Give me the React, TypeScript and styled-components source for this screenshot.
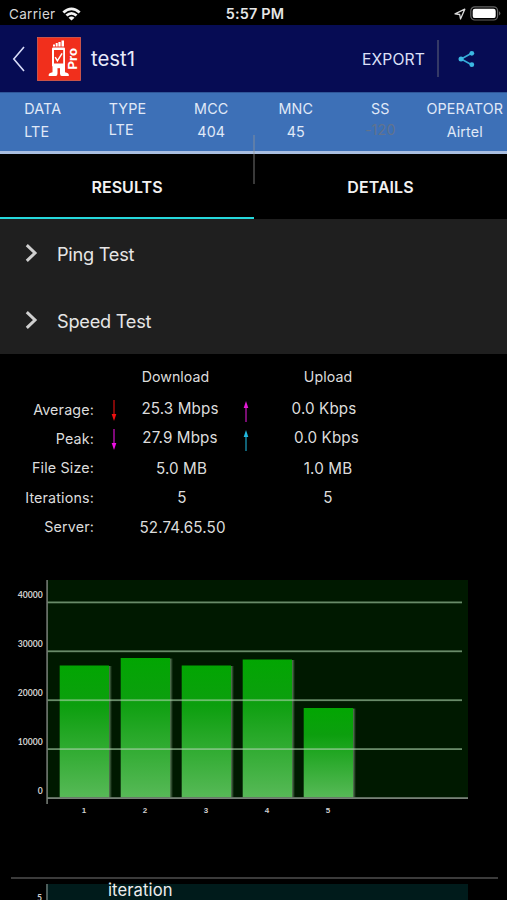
import React from 'react';
import styled, { createGlobalStyle } from 'styled-components';

const GlobalStyle = createGlobalStyle`
  * { box-sizing: border-box; }
  html, body { margin: 0; background: #000; overflow: hidden; }
  body { font-family: Inter, "Liberation Sans", sans-serif; color: #ededed; }
`;

const Screen = styled.div`
  display: flex;
  flex-direction: column;
  width: 507px;
  height: 900px;
  overflow: hidden;
  background: #000;
`;

const StatusBar = styled.div`
  display: grid;
  grid-template-columns: 1fr auto 1fr;
  align-items: center;
  flex: none;
  height: 25px;
  padding: 2px 6px 0 9px;
  font-size: 13.5px;
  line-height: 22px;
  color: #d6d6d6;
`;

const Carrier = styled.div`
  display: flex;
  align-items: center;
  gap: 6px;
  letter-spacing: 0.32px;
`;

const Clock = styled.div`
  font-size: 14.4px;
  font-weight: 600;
  letter-spacing: 0.2px;
  color: #e6e6e6;
`;

const StatusIcons = styled.div`
  display: flex;
  justify-content: flex-end;
  align-items: center;
  gap: 4px;
`;

const Header = styled.header`
  display: flex;
  align-items: center;
  flex: none;
  height: 67px;
  padding-left: 12px;
  background: #060c54;
`;

const AppIcon = styled.svg`
  margin-left: 12px;
`;

const Title = styled.h1`
  flex: 1;
  margin: 1px 0 0 10px;
  font-size: 20.4px;
  font-weight: 400;
  line-height: 24px;
  color: #e8eafa;
`;

const ExportButton = styled.button`
  margin-top: 2px;
  padding: 0;
  border: 0;
  background: none;
  font: 400 15.7px/20px Inter, sans-serif;
  letter-spacing: 0.1px;
  color: #dde0f8;
`;

const HeaderRule = styled.div`
  width: 2px;
  height: 37px;
  margin-left: 12px;
  background: #343966;
`;

const ShareButton = styled.button`
  display: flex;
  margin: 0 32px 0 19px;
  padding: 0;
  border: 0;
  background: none;
`;

const InfoBar = styled.div`
  display: grid;
  grid-template-columns: 84.5px 84.5px 84.5px 84.5px 84.5px 84.5px;
  flex: none;
  height: 62px;
  padding-top: 7px;
  border-top: 1px solid #2f5698;
  border-bottom: 3px solid #a9bee0;
  background: #3d70b7;
`;

const InfoColumn = styled.div<{ $start?: boolean }>`
  display: flex;
  flex-direction: column;
  align-items: ${p => (p.$start ? 'flex-start' : 'center')};
  padding-left: ${p => (p.$start ? 24.2 : 0)}px;
  white-space: nowrap;
  font-size: 14.3px;
  line-height: 18px;
  letter-spacing: 0.15px;
  color: #e0e9f7;
`;

const InfoValue = styled.span<{ $raised?: boolean; $muted?: boolean }>`
  margin-top: ${p => (p.$raised ? 3 : 5)}px;
  color: ${p => (p.$muted ? '#61738e' : 'inherit')};
`;

const TabBar = styled.nav`
  position: relative;
  display: grid;
  grid-template-columns: 254px 253px;
  flex: none;
  height: 65px;
`;

const Tab = styled.button<{ $active?: boolean }>`
  padding: 2px 0 0;
  border: 0;
  border-bottom: 2px solid ${p => (p.$active ? '#25d8dc' : '#000')};
  background: none;
  font: 600 16px/20px Inter, sans-serif;
  letter-spacing: 0.05px;
  color: #f2f2f2;
`;

const TabDivider = styled.div`
  position: absolute;
  left: 253px;
  top: -19px;
  width: 2px;
  height: 49px;
  background: rgba(150, 150, 150, 0.38);
`;

const Sections = styled.div`
  flex: none;
  height: 135px;
  background: #1f1f1f;
`;

const SectionRow = styled.button`
  display: flex;
  align-items: center;
  gap: 19px;
  width: 100%;
  height: 67px;
  padding: 2px 0 0 25px;
  border: 0;
  background: none;
  font: 400 18.2px/24px Inter, sans-serif;
  letter-spacing: -0.25px;
  color: #e6e6e6;
`;

const Results = styled.div`
  display: flex;
  flex-direction: column;
  flex: none;
  height: 220px;
  padding-top: 9px;
`;

const ResultRow = styled.div<{ $head?: boolean }>`
  display: grid;
  grid-template-columns: 94px 40px 96px 32px 132px;
  align-items: center;
  height: ${p => (p.$head ? 32 : 29.3)}px;
  padding-bottom: ${p => (p.$head ? 5 : 0)}px;
  white-space: nowrap;
  font-size: 14.3px;
  line-height: 20px;
  color: #dcdcdc;
`;

const Label = styled.span`
  text-align: right;
  letter-spacing: 0.15px;
`;

const ArrowCell = styled.span`
  display: flex;
  justify-content: center;
  padding-top: 2px;
`;

const Value = styled.span<{ $shift?: number; $lift?: number; $small?: boolean }>`
  display: flex;
  justify-content: center;
  margin-left: ${p => p.$shift ?? 0}px;
  margin-right: ${p => -(p.$shift ?? 0)}px;
  margin-top: ${p => -(p.$lift ?? 0)}px;
  margin-bottom: ${p => p.$lift ?? 0}px;
  font-size: ${p => (p.$small ? 14.2 : 15.2)}px;
  letter-spacing: ${p => (p.$small ? 0.05 : 0.12)}px;
`;

const Chart = styled.svg`
  display: block;
  flex: none;
`;

const AxisText = styled.text`
  font-family: Lato, sans-serif;
  font-size: 8.6px;
  font-weight: 700;
  fill: #cfcfcf;
`;

const BarText = styled(AxisText)`
  font-family: "Liberation Sans", sans-serif;
  font-size: 8px;
`;

const Divider = styled.hr`
  flex: none;
  width: 487px;
  height: 2px;
  margin: 48px 0 5px 11px;
  border: 0;
  background: #3b3b3b;
`;

const IterationPanel = styled.div`
  display: grid;
  grid-template-columns: 46px 422px;
  flex: none;
  height: 16px;
`;

const IterationAxis = styled.span`
  padding: 8px 4px 0 0;
  text-align: right;
  font: 700 8.6px/12px Lato, sans-serif;
  color: #cfcfcf;
`;

const IterationBody = styled.div`
  padding-left: 60px;
  border-left: 2px solid #4d5d5b;
  background: #001b1b;
  font-size: 16.6px;
  line-height: 13px;
  letter-spacing: 0.1px;
`;

const WifiIcon = () => (
  <svg width="19" height="14" viewBox="0 0 19 14">
    <path d="M0.4 4.5Q9.5-3.7 18.6 4.5L16.7 6.5Q9.5.2 2.3 6.5ZM3.5 7.6Q9.5 2.4 15.5 7.6L13.6 9.6Q9.5 6.1 5.4 9.6ZM6.5 10.7Q9.5 8.2 12.5 10.7L9.5 13.6Z" fill="#f2f2f2" />
  </svg>
);

const LocationIcon = () => (
  <svg width="12" height="12" viewBox="0 0 12 12">
    <path d="M1 5.8 10.8 1.2 6.5 11 5.7 6.5Z" fill="none" stroke="#dadada" strokeWidth="1.3" strokeLinejoin="round" />
  </svg>
);

const BatteryIcon = () => (
  <svg width="31" height="15" viewBox="0 0 31 15">
    <rect x="0.8" y="0.8" width="26.8" height="13.2" rx="4" fill="none" stroke="#656565" strokeWidth="1.2" />
    <rect x="2.7" y="2.7" width="23" height="9.4" rx="2.2" fill="#fff" />
    <path d="M29 5.2Q31.8 7.4 29 9.6Z" fill="#656565" />
  </svg>
);

const LogoIcon = () => (
  <AppIcon width="44" height="44" viewBox="0 0 44 44">
    <rect x="0.5" y="0.5" width="43" height="43" fill="#f12f1c" stroke="#db624f" strokeWidth="0.8" />
    <g fill="#fff">
      <path d="M16 9.5v-2h2v2zM18.7 9.5V6h2v3.5zM21.4 9.5V5h2.2v4.5zM24.5 9.5V3.5h2.5v6z" />
      <path fillRule="evenodd" d="M16.3 10.5h10.5q1.2 0 1.2 1.2v17.6h-13V11.7q0-1.2 1.3-1.2ZM17 13v13.6h9.2V13Z" />
      <path d="M15.5 29h5v7.5q0 2.5-1.8 2.5h-7v-1.2q0-2 3.8-2.6ZM23 29h5v6.2q3.8.6 3.8 2.6V39h-7q-1.8 0-1.8-2.5Z" />
      <rect x="20" y="28.5" width="3.7" height="2.7" />
    </g>
    <path d="m18.2 20.2 2.2 3.7 4.7-7.5" fill="none" stroke="#fff" strokeWidth="1.5" />
    <text transform="translate(39.8 32.5) rotate(-90)" fontFamily="Inter, sans-serif" fontSize="11.8" fontWeight="700" textLength="21.5" lengthAdjust="spacingAndGlyphs" fill="#fff">Pro</text>
  </AppIcon>
);

const ShareIcon = () => (
  <svg width="17" height="18" viewBox="0 0 17 18">
    <path d="M14 3 3.2 9 14 15" fill="none" stroke="#36acd9" strokeWidth="1.6" />
    <g fill="#3cb9e3">
      <circle cx="13.8" cy="3.3" r="2.4" />
      <circle cx="3" cy="9" r="2.5" />
      <circle cx="13.8" cy="14.7" r="2.4" />
    </g>
  </svg>
);

const Arrow = ({ color, up }: { color: string; up?: boolean }) => (
  <svg width="6" height="22" viewBox="0 0 6 22">
    <g transform={up ? 'translate(0 1)' : 'rotate(180 3 11) translate(0 1)'}>
      <path d="M3 5v16" stroke={color} strokeWidth="1.5" opacity="0.7" />
      <path d="M3 0 5.3 7H.7Z" fill={color} />
    </g>
  </svg>
);

const info = [
  { label: 'DATA', value: 'LTE', start: true },
  { label: 'TYPE', value: 'LTE', start: true, raised: true },
  { label: 'MCC', value: '404' },
  { label: 'MNC', value: '45' },
  { label: 'SS', value: '-120', raised: true, muted: true },
  { label: 'OPERATOR', value: 'Airtel' },
];

const bars = [
  { x: 60, top: 665.5 },
  { x: 121, top: 658 },
  { x: 182, top: 665.5 },
  { x: 243, top: 659.5 },
  { x: 304, top: 708 },
];

const ticks = [40000, 30000, 20000, 10000, 0];

const SpeedChart = () => (
  <Chart width="507" height="255" viewBox="0 574 507 255">
    <defs>
      <linearGradient id="bar" x1="0" y1="0" x2="0" y2="1">
        <stop offset="0" stopColor="#02a602" />
        <stop offset="0.3" stopColor="#0c9f0e" />
        <stop offset="1" stopColor="#57b957" />
      </linearGradient>
      <linearGradient id="edge">
        <stop offset="0" stopColor="#6b8c69" />
        <stop offset="1" stopColor="#001900" />
      </linearGradient>
    </defs>
    <rect x="47" y="580" width="421" height="218" fill="#001900" />
    {bars.map(b => (
      <g key={b.x}>
        <rect x={b.x + 48.5} y={b.top + 0.5} width="3.5" height={797 - b.top} fill="url(#edge)" />
        <rect x={b.x - 0.3} y={b.top} width="49.3" height={797.5 - b.top} fill="url(#bar)" />
      </g>
    ))}
    {ticks.map((t, i) => (
      <g key={t}>
        <AxisText x="42.7" y={598.3 + i * 48.95} textAnchor="end">{t}</AxisText>
        {t > 0 && <rect x="47" y={601.5 + i * 48.9} width="415" height="1.8" fill="#a9d2a9" opacity="0.62" />}
      </g>
    ))}
    <rect x="46.3" y="580" width="1.6" height="224" fill="#737973" />
    <rect x="47" y="797.2" width="421" height="1.8" fill="#778277" />
    {bars.map((b, i) => (
      <BarText key={b.x} x={b.x + 24} y="812.5" textAnchor="middle">{i + 1}</BarText>
    ))}
  </Chart>
);

const SectionChevron = () => (
  <svg width="13" height="19" viewBox="0 0 13 19">
    <path d="m1.8 1.2 8.2 7.8-8.2 7.8" fill="none" stroke="#cfcfcf" strokeWidth="3" />
  </svg>
);

export default function App() {
  return (
    <Screen>
      <GlobalStyle />
      <StatusBar>
        <Carrier>Carrier <WifiIcon /></Carrier>
        <Clock>5:57 PM</Clock>
        <StatusIcons><LocationIcon /><BatteryIcon /></StatusIcons>
      </StatusBar>
      <Header>
        <svg width="13" height="26" viewBox="0 0 13 26">
          <path d="M12 1 1.8 13 12 25" fill="none" stroke="#d8dcf8" strokeWidth="1.6" />
        </svg>
        <LogoIcon />
        <Title>test1</Title>
        <ExportButton>EXPORT</ExportButton>
        <HeaderRule />
        <ShareButton aria-label="Share"><ShareIcon /></ShareButton>
      </Header>
      <InfoBar>
        {info.map(c => (
          <InfoColumn key={c.label} $start={c.start}>
            <span>{c.label}</span>
            <InfoValue $raised={c.raised} $muted={c.muted}>{c.value}</InfoValue>
          </InfoColumn>
        ))}
      </InfoBar>
      <TabBar>
        <Tab $active>RESULTS</Tab>
        <Tab>DETAILS</Tab>
        <TabDivider />
      </TabBar>
      <Sections>
        <SectionRow><SectionChevron />Ping Test</SectionRow>
        <SectionRow><SectionChevron />Speed Test</SectionRow>
      </Sections>
      <Results>
        <ResultRow $head>
          <span /><span />
          <Value $small $shift={-6.5}>Download</Value>
          <span />
          <Value $small>Upload</Value>
        </ResultRow>
        <ResultRow>
          <Label>Average:</Label>
          <ArrowCell><Arrow color="#f01010" /></ArrowCell>
          <Value $shift={-2} $lift={1}>25.3 Mbps</Value>
          <ArrowCell><Arrow color="#e51bd8" up /></ArrowCell>
          <Value $shift={-4} $lift={1}>0.0 Kbps</Value>
        </ResultRow>
        <ResultRow>
          <Label>Peak:</Label>
          <ArrowCell><Arrow color="#ee10e6" /></ArrowCell>
          <Value $shift={-2} $lift={1}>27.9 Mbps</Value>
          <ArrowCell><Arrow color="#20b9df" up /></ArrowCell>
          <Value $shift={-1.5} $lift={1}>0.0 Kbps</Value>
        </ResultRow>
        <ResultRow>
          <Label>File Size:</Label><span />
          <Value $shift={-0.5} $lift={-1}>5.0 MB</Value><span />
          <Value $lift={-1}>1.0 MB</Value>
        </ResultRow>
        <ResultRow>
          <Label>Iterations:</Label><span />
          <Value>5</Value><span />
          <Value>5</Value>
        </ResultRow>
        <ResultRow>
          <Label>Server:</Label><span />
          <Value $shift={0.5} $lift={-1}>52.74.65.50</Value>
        </ResultRow>
      </Results>
      <SpeedChart />
      <Divider />
      <IterationPanel>
        <IterationAxis>5</IterationAxis>
        <IterationBody>iteration</IterationBody>
      </IterationPanel>
    </Screen>
  );
}
